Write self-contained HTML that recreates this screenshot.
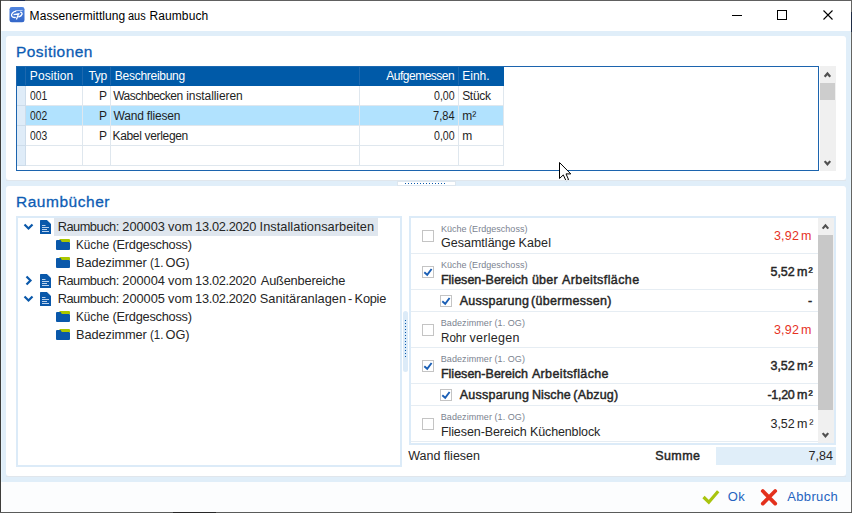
<!DOCTYPE html>
<html><head><meta charset="utf-8">
<style>
*{margin:0;padding:0;box-sizing:border-box}
html,body{width:852px;height:513px;overflow:hidden;background:#606060}
body{position:relative;font-family:"Liberation Sans",sans-serif;color:#1e1e1e}
.a{position:absolute}
svg{position:absolute;overflow:visible}
.t{position:absolute;white-space:pre;line-height:1;font-family:"Liberation Sans",sans-serif}
</style></head><body>

<div class="a" style="left:1px;top:1px;width:850px;height:511px;background:#fcfdfe;"></div>
<div class="a" style="left:1px;top:1px;width:850px;height:30px;background:#ffffff;"></div>
<div class="a" style="left:1px;top:31px;width:850px;height:451px;background:#e0eef9;"></div>
<div class="a" style="left:0px;top:0px;width:1px;height:513px;background:#3e3d3b;"></div>
<div class="a" style="left:851px;top:0px;width:1px;height:513px;background:#646462;"></div>
<div class="a" style="left:0px;top:512px;width:852px;height:1px;background:#5a5b5a;"></div>
<div class="a" style="left:10px;top:0px;width:15px;height:1px;background:#1c2b4e;"></div>
<div class="a" style="left:851px;top:12px;width:1px;height:20px;background:#1f2c44;"></div>
<div class="a" style="left:173px;top:512px;width:43px;height:1px;background:#262626;"></div>
<div class="a" style="left:1px;top:31px;width:1px;height:451px;background:#e7f4fc;"></div>
<div class="a" style="left:850px;top:31px;width:1px;height:451px;background:#e7f4fc;"></div>
<svg style="left:9px;top:7px" width="16" height="16" viewBox="0 0 16 16"><defs><linearGradient id="ig" x1="0" y1="0" x2="0" y2="1"><stop offset="0" stop-color="#4f84e0"/><stop offset="1" stop-color="#3366c8"/></linearGradient></defs><rect x="0.5" y="0" width="15" height="15.3" rx="2.3" fill="url(#ig)"/><path d="M7.2 4.2 C4 4.8 2 6.8 2.6 8.8 C3.1 10.4 5.4 10.6 6.8 10.3" stroke="#fff" stroke-width="1.3" fill="none"/><path d="M6.6 3.6 L13.6 3.4" stroke="#fff" stroke-width="0.8" fill="none" opacity="0.8"/><path d="M4.6 7.6 L10.6 6.6 M9.6 6.8 L7.4 12.6 M11.2 5.2 C14.2 5.6 13.6 8.6 9.4 10.2" stroke="#fff" stroke-width="1.3" fill="none"/></svg>
<div class="a" style="left:732px;top:15px;width:10px;height:1px;background:#000;"></div>
<div class="a" style="left:777px;top:10px;width:10px;height:10px;border:1px solid #000"></div>
<svg style="left:822px;top:9px" width="12" height="12" viewBox="0 0 12 12"><path d="M1.5 1.5 L10.5 10.5 M10.5 1.5 L1.5 10.5" stroke="#000" stroke-width="1.1"/></svg>
<div class="a" style="left:6px;top:36px;width:840px;height:144px;background:#fff;border-radius:3px"></div>
<div class="a" style="left:16px;top:66px;width:803px;height:105px;border:1px solid #1c64ae;background:#fff"></div>
<div class="a" style="left:17px;top:66px;width:487px;height:20px;background:#005aa8;"></div>
<div class="a" style="left:17px;top:66px;width:487px;height:1px;background:#1b68b0;"></div>
<div class="a" style="left:17px;top:86px;width:8px;height:80px;background:#dfecf8;"></div>
<div class="a" style="left:26px;top:106px;width:477px;height:19px;background:#b1e2fe;"></div>
<div class="a" style="left:25px;top:67px;width:1px;height:18px;background:#1d68ae;"></div>
<div class="a" style="left:82px;top:67px;width:1px;height:18px;background:#1d68ae;"></div>
<div class="a" style="left:110px;top:67px;width:1px;height:18px;background:#1d68ae;"></div>
<div class="a" style="left:359px;top:67px;width:1px;height:18px;background:#1d68ae;"></div>
<div class="a" style="left:458px;top:67px;width:1px;height:18px;background:#1d68ae;"></div>
<div class="a" style="left:25px;top:86px;width:1px;height:80px;background:#cddcea;"></div>
<div class="a" style="left:82px;top:86px;width:1px;height:80px;background:#dfe7ee;"></div>
<div class="a" style="left:110px;top:86px;width:1px;height:80px;background:#dfe7ee;"></div>
<div class="a" style="left:359px;top:86px;width:1px;height:80px;background:#dfe7ee;"></div>
<div class="a" style="left:458px;top:86px;width:1px;height:80px;background:#dfe7ee;"></div>
<div class="a" style="left:503px;top:86px;width:1px;height:80px;background:#dfe7ee;"></div>
<div class="a" style="left:26px;top:105px;width:478px;height:1px;background:#dfe7ee;"></div>
<div class="a" style="left:17px;top:105px;width:8px;height:1px;background:#cddcea;"></div>
<div class="a" style="left:26px;top:125px;width:478px;height:1px;background:#dfe7ee;"></div>
<div class="a" style="left:17px;top:125px;width:8px;height:1px;background:#cddcea;"></div>
<div class="a" style="left:26px;top:145px;width:478px;height:1px;background:#dfe7ee;"></div>
<div class="a" style="left:17px;top:145px;width:8px;height:1px;background:#cddcea;"></div>
<div class="a" style="left:26px;top:165px;width:478px;height:1px;background:#dfe7ee;"></div>
<div class="a" style="left:17px;top:165px;width:8px;height:1px;background:#cddcea;"></div>
<div class="a" style="left:820px;top:66px;width:16px;height:105px;background:#f0f0f0;"></div>
<div class="a" style="left:820px;top:83px;width:15px;height:17px;background:#cdcdcd;"></div>
<svg style="left:820px;top:66px" width="16" height="105"><path d="M4.65 10.7 L7.45 7.5 L10.25 10.7" stroke="#505050" stroke-width="2.2" fill="none"/><path d="M4.65 95.1 L7.45 98.3 L10.25 95.1" stroke="#505050" stroke-width="2.2" fill="none"/></svg>
<svg style="left:559px;top:162px" width="14" height="22" viewBox="0 0 14 22"><path d="M0.5 0.5 L0.5 16.5 L4.3 12.9 L7 18.8 L9.6 17.7 L7 11.9 L11.8 11.9 Z" fill="#fff" stroke="#000" stroke-width="1"/></svg>
<div class="a" style="left:6px;top:180px;width:840px;height:1px;background:#e0e6ec;"></div>
<div class="a" style="left:6px;top:476px;width:840px;height:1px;background:#e0e6ec;"></div>
<div class="a" style="left:397px;top:180px;width:59px;height:6px;background:#dde6ee;"></div>
<div class="a" style="left:398px;top:182px;width:57px;height:3px;background:#ffffff;"></div>
<svg style="left:0;top:0" width="852" height="513" shape-rendering="crispEdges"><g fill="#0a5aad"><rect x="405" y="183" width="1" height="1"/><rect x="408" y="183" width="1" height="1"/><rect x="411" y="183" width="1" height="1"/><rect x="414" y="183" width="1" height="1"/><rect x="417" y="183" width="1" height="1"/><rect x="420" y="183" width="1" height="1"/><rect x="423" y="183" width="1" height="1"/><rect x="426" y="183" width="1" height="1"/><rect x="429" y="183" width="1" height="1"/><rect x="432" y="183" width="1" height="1"/><rect x="435" y="183" width="1" height="1"/><rect x="438" y="183" width="1" height="1"/><rect x="441" y="183" width="1" height="1"/><rect x="444" y="183" width="1" height="1"/></g></svg>
<div class="a" style="left:6px;top:186px;width:840px;height:290px;background:#fff;border-radius:3px"></div>
<div class="a" style="left:16px;top:216px;width:386px;height:251px;border:2px solid #dcebf8"></div>
<div class="a" style="left:54px;top:218px;width:324px;height:18px;background:#dfe6ee;"></div>
<div class="a" style="left:403px;top:311px;width:5px;height:61px;background:#dcebf8;border-radius:2.5px"></div>
<svg style="left:0;top:0" width="852" height="513" shape-rendering="crispEdges"><g fill="#0a5aad"><rect x="405" y="320" width="1" height="1"/><rect x="405" y="323" width="1" height="1"/><rect x="405" y="326" width="1" height="1"/><rect x="405" y="329" width="1" height="1"/><rect x="405" y="332" width="1" height="1"/><rect x="405" y="335" width="1" height="1"/><rect x="405" y="338" width="1" height="1"/><rect x="405" y="341" width="1" height="1"/><rect x="405" y="344" width="1" height="1"/><rect x="405" y="347" width="1" height="1"/><rect x="405" y="350" width="1" height="1"/><rect x="405" y="353" width="1" height="1"/><rect x="405" y="356" width="1" height="1"/></g></svg>
<svg style="left:0;top:0" width="852" height="513"><path d="M24.5 224.5 L28.5 228.5 L32.5 224.5" stroke="#0a58aa" stroke-width="2.2" fill="none"/></svg>
<svg style="left:40px;top:220px" width="12" height="14" viewBox="0 0 12 14"><path d="M0.6 0 L7.3 0 L11 3.7 L11 13.4 Q11 14 10.4 14 L0.6 14 Q0 14 0 13.4 L0 0.6 Q0 0 0.6 0 Z" fill="#0a58aa"/><path d="M7.6 0.3 L10.7 3.4" stroke="#ffffff" stroke-width="0.9" fill="none"/><path d="M7.9 1.2 L9.8 3.1 L7.9 3.1 Z" fill="#0a58aa"/><g fill="#bcd2ec"><rect x="2" y="5" width="3.5" height="1"/><rect x="2" y="7" width="7" height="1"/><rect x="2" y="9" width="5" height="1"/><rect x="2" y="11" width="7" height="1"/></g></svg>
<svg style="left:56px;top:239px" width="15" height="12" viewBox="0 0 15 12"><path d="M3.5 0 L13 0 Q14 0 14 1 L14 3 L3.5 3 Z" fill="#abc700"/><path d="M1 1 L4.6 1 L5.8 3 L13 3 Q14 3 14 4 L14 10 Q14 11 13 11 L1 11 Q0 11 0 10 L0 2 Q0 1 1 1 Z" fill="#0a58aa"/></svg>
<svg style="left:56px;top:257px" width="15" height="12" viewBox="0 0 15 12"><path d="M3.5 0 L13 0 Q14 0 14 1 L14 3 L3.5 3 Z" fill="#abc700"/><path d="M1 1 L4.6 1 L5.8 3 L13 3 Q14 3 14 4 L14 10 Q14 11 13 11 L1 11 Q0 11 0 10 L0 2 Q0 1 1 1 Z" fill="#0a58aa"/></svg>
<svg style="left:0;top:0" width="852" height="513"><path d="M26.5 276.5 L30.5 280.5 L26.5 284.5" stroke="#0a58aa" stroke-width="2.2" fill="none"/></svg>
<svg style="left:40px;top:274px" width="12" height="14" viewBox="0 0 12 14"><path d="M0.6 0 L7.3 0 L11 3.7 L11 13.4 Q11 14 10.4 14 L0.6 14 Q0 14 0 13.4 L0 0.6 Q0 0 0.6 0 Z" fill="#0a58aa"/><path d="M7.6 0.3 L10.7 3.4" stroke="#ffffff" stroke-width="0.9" fill="none"/><path d="M7.9 1.2 L9.8 3.1 L7.9 3.1 Z" fill="#0a58aa"/><g fill="#bcd2ec"><rect x="2" y="5" width="3.5" height="1"/><rect x="2" y="7" width="7" height="1"/><rect x="2" y="9" width="5" height="1"/><rect x="2" y="11" width="7" height="1"/></g></svg>
<svg style="left:0;top:0" width="852" height="513"><path d="M24.5 296.5 L28.5 300.5 L32.5 296.5" stroke="#0a58aa" stroke-width="2.2" fill="none"/></svg>
<svg style="left:40px;top:292px" width="12" height="14" viewBox="0 0 12 14"><path d="M0.6 0 L7.3 0 L11 3.7 L11 13.4 Q11 14 10.4 14 L0.6 14 Q0 14 0 13.4 L0 0.6 Q0 0 0.6 0 Z" fill="#0a58aa"/><path d="M7.6 0.3 L10.7 3.4" stroke="#ffffff" stroke-width="0.9" fill="none"/><path d="M7.9 1.2 L9.8 3.1 L7.9 3.1 Z" fill="#0a58aa"/><g fill="#bcd2ec"><rect x="2" y="5" width="3.5" height="1"/><rect x="2" y="7" width="7" height="1"/><rect x="2" y="9" width="5" height="1"/><rect x="2" y="11" width="7" height="1"/></g></svg>
<svg style="left:56px;top:311px" width="15" height="12" viewBox="0 0 15 12"><path d="M3.5 0 L13 0 Q14 0 14 1 L14 3 L3.5 3 Z" fill="#abc700"/><path d="M1 1 L4.6 1 L5.8 3 L13 3 Q14 3 14 4 L14 10 Q14 11 13 11 L1 11 Q0 11 0 10 L0 2 Q0 1 1 1 Z" fill="#0a58aa"/></svg>
<svg style="left:56px;top:329px" width="15" height="12" viewBox="0 0 15 12"><path d="M3.5 0 L13 0 Q14 0 14 1 L14 3 L3.5 3 Z" fill="#abc700"/><path d="M1 1 L4.6 1 L5.8 3 L13 3 Q14 3 14 4 L14 10 Q14 11 13 11 L1 11 Q0 11 0 10 L0 2 Q0 1 1 1 Z" fill="#0a58aa"/></svg>
<div class="a" style="left:409px;top:216px;width:427px;height:229px;border:2px solid #dcebf8"></div>
<div class="a" style="left:411px;top:253px;width:407px;height:1px;background:#e6edf3;"></div>
<div class="a" style="left:411px;top:289px;width:407px;height:1px;background:#e6edf3;"></div>
<div class="a" style="left:411px;top:311px;width:407px;height:1px;background:#e6edf3;"></div>
<div class="a" style="left:411px;top:347px;width:407px;height:1px;background:#e6edf3;"></div>
<div class="a" style="left:411px;top:383px;width:407px;height:1px;background:#e6edf3;"></div>
<div class="a" style="left:411px;top:405px;width:407px;height:1px;background:#e6edf3;"></div>
<div class="a" style="left:411px;top:441px;width:407px;height:1px;background:#e6edf3;"></div>
<div class="a" style="left:818px;top:218px;width:16px;height:225px;background:#f0f0f0;"></div>
<div class="a" style="left:818px;top:235px;width:15px;height:175px;background:#c8c8c8;"></div>
<svg style="left:818px;top:218px" width="16" height="225"><path d="M4.65 10.6 L7.45 7.4 L10.25 10.6" stroke="#505050" stroke-width="2.2" fill="none"/><path d="M4.65 215.1 L7.45 218.3 L10.25 215.1" stroke="#505050" stroke-width="2.2" fill="none"/></svg>
<svg style="left:422px;top:230px" width="12" height="12" viewBox="0 0 12 12"><rect x="0.5" y="0.5" width="11" height="11" fill="#fff" stroke="#c4c4c4" stroke-width="1"/></svg>
<svg style="left:422px;top:266px" width="12" height="12" viewBox="0 0 12 12"><rect x="0.5" y="0.5" width="11" height="11" fill="#fff" stroke="#c4c4c4" stroke-width="1"/><path d="M2.3 6.3 L5.2 8.8 L9.6 3" stroke="#1b5fb5" stroke-width="1.9" fill="none"/></svg>
<svg style="left:440px;top:295px" width="12" height="12" viewBox="0 0 12 12"><rect x="0.5" y="0.5" width="11" height="11" fill="#fff" stroke="#c4c4c4" stroke-width="1"/><path d="M2.3 6.3 L5.2 8.8 L9.6 3" stroke="#1b5fb5" stroke-width="1.9" fill="none"/></svg>
<svg style="left:422px;top:324px" width="12" height="12" viewBox="0 0 12 12"><rect x="0.5" y="0.5" width="11" height="11" fill="#fff" stroke="#c4c4c4" stroke-width="1"/></svg>
<svg style="left:422px;top:360px" width="12" height="12" viewBox="0 0 12 12"><rect x="0.5" y="0.5" width="11" height="11" fill="#fff" stroke="#c4c4c4" stroke-width="1"/><path d="M2.3 6.3 L5.2 8.8 L9.6 3" stroke="#1b5fb5" stroke-width="1.9" fill="none"/></svg>
<svg style="left:440px;top:389px" width="12" height="12" viewBox="0 0 12 12"><rect x="0.5" y="0.5" width="11" height="11" fill="#fff" stroke="#c4c4c4" stroke-width="1"/><path d="M2.3 6.3 L5.2 8.8 L9.6 3" stroke="#1b5fb5" stroke-width="1.9" fill="none"/></svg>
<svg style="left:422px;top:418px" width="12" height="12" viewBox="0 0 12 12"><rect x="0.5" y="0.5" width="11" height="11" fill="#fff" stroke="#c4c4c4" stroke-width="1"/></svg>
<div class="a" style="left:716px;top:447px;width:120px;height:18px;background:#e0eef9;"></div>
<svg style="left:0;top:0" width="852" height="513"><path d="M703.5 497 L708.8 502.2 L718.2 491.2" stroke="#a9c40f" stroke-width="3.2" fill="none"/></svg>
<svg style="left:0;top:0" width="852" height="513"><path d="M762.8 491 L775.2 503.6 M775.2 491 L762.8 503.6" stroke="#e3311d" stroke-width="3.8" fill="none" stroke-linecap="round"/></svg>
<div class="t" style="left:29.6px;top:10px;font-size:12px;font-weight:400;letter-spacing:0.06px;color:#000;">Massenermittlung</div>
<div class="t" style="left:128.49px;top:10px;font-size:12px;font-weight:400;letter-spacing:0px;color:#000;transform:scaleX(0.9111);transform-origin:0 0;">aus</div>
<div class="t" style="left:149.4px;top:10px;font-size:12px;font-weight:400;letter-spacing:0.114px;color:#000;">Raumbuch</div>
<div class="t" style="left:16.0px;top:44px;font-size:15.5px;font-weight:400;letter-spacing:0.444px;color:#0d5cb4;-webkit-text-stroke:0.3px #0d5cb4;">Positionen</div>
<div class="t" style="left:16.0px;top:194px;font-size:15.5px;font-weight:400;letter-spacing:0.522px;color:#0d5cb4;-webkit-text-stroke:0.3px #0d5cb4;">Raumbücher</div>
<div class="t" style="left:29.8px;top:70px;font-size:12px;font-weight:400;letter-spacing:0.086px;color:#ffffff;">Position</div>
<div class="t" style="left:88.5px;top:70px;font-size:12px;font-weight:400;letter-spacing:-0.35px;color:#ffffff;">Typ</div>
<div class="t" style="left:114.8px;top:70px;font-size:12px;font-weight:400;letter-spacing:-0.273px;color:#ffffff;">Beschreibung</div>
<div class="t" style="left:386.3px;top:70px;font-size:12px;font-weight:400;letter-spacing:-0.5px;color:#ffffff;">Aufgemessen</div>
<div class="t" style="left:462.2px;top:70px;font-size:12px;font-weight:400;letter-spacing:0.025px;color:#ffffff;">Einh.</div>
<div class="t" style="left:30.1px;top:90px;font-size:12px;font-weight:400;letter-spacing:0px;color:#1e1e1e;transform:scaleX(0.8579);transform-origin:0 0;">001</div>
<div class="t" style="left:99.0px;top:90px;font-size:12px;font-weight:400;letter-spacing:0px;color:#1e1e1e;">P</div>
<div class="t" style="left:113.2px;top:90px;font-size:12px;font-weight:400;letter-spacing:-0.49px;color:#1e1e1e;">Waschbecken</div>
<div class="t" style="left:186.2px;top:90px;font-size:12px;font-weight:400;letter-spacing:-0.073px;color:#1e1e1e;">installieren</div>
<div class="t" style="left:434.3px;top:90px;font-size:12px;font-weight:400;letter-spacing:0px;color:#1e1e1e;transform:scaleX(0.8826);transform-origin:0 0;">0,00</div>
<div class="t" style="left:462.2px;top:90px;font-size:12px;font-weight:400;letter-spacing:-0.325px;color:#1e1e1e;">Stück</div>
<div class="t" style="left:30.1px;top:110px;font-size:12px;font-weight:400;letter-spacing:0px;color:#1e1e1e;transform:scaleX(0.8579);transform-origin:0 0;">002</div>
<div class="t" style="left:99.0px;top:110px;font-size:12px;font-weight:400;letter-spacing:0px;color:#1e1e1e;">P</div>
<div class="t" style="left:113.5px;top:110px;font-size:12px;font-weight:400;letter-spacing:-0.182px;color:#1e1e1e;">Wand fliesen</div>
<div class="t" style="left:433.38px;top:110px;font-size:12px;font-weight:400;letter-spacing:0px;color:#1e1e1e;transform:scaleX(0.9227);transform-origin:0 0;">7,84</div>
<div class="t" style="left:462.2px;top:110px;font-size:12px;font-weight:400;letter-spacing:0.1px;color:#1e1e1e;">m²</div>
<div class="t" style="left:30.1px;top:130px;font-size:12px;font-weight:400;letter-spacing:0px;color:#1e1e1e;transform:scaleX(0.8579);transform-origin:0 0;">003</div>
<div class="t" style="left:99.0px;top:130px;font-size:12px;font-weight:400;letter-spacing:0px;color:#1e1e1e;">P</div>
<div class="t" style="left:112.5px;top:130px;font-size:12px;font-weight:400;letter-spacing:-0.331px;color:#1e1e1e;">Kabel verlegen</div>
<div class="t" style="left:434.3px;top:130px;font-size:12px;font-weight:400;letter-spacing:0px;color:#1e1e1e;transform:scaleX(0.8826);transform-origin:0 0;">0,00</div>
<div class="t" style="left:462.2px;top:130px;font-size:12px;font-weight:400;letter-spacing:0px;color:#1e1e1e;">m</div>
<div class="t" style="left:57.7px;top:221px;font-size:12.8px;font-weight:400;letter-spacing:-0.488px;color:#262626;">Raumbuch:</div>
<div class="t" style="left:122.3px;top:221px;font-size:12.8px;font-weight:400;letter-spacing:-0.02px;color:#262626;">200003</div>
<div class="t" style="left:167.9px;top:221px;font-size:12.8px;font-weight:400;letter-spacing:0.15px;color:#262626;">vom</div>
<div class="t" style="left:195.1px;top:221px;font-size:12.8px;font-weight:400;letter-spacing:-0.322px;color:#262626;">13.02.2020</div>
<div class="t" style="left:259.6px;top:221px;font-size:12.8px;font-weight:400;letter-spacing:0.03px;color:#262626;">Installationsarbeiten</div>
<div class="t" style="left:76.19px;top:239px;font-size:12.8px;font-weight:400;letter-spacing:0px;color:#262626;transform:scaleX(0.9143);transform-origin:0 0;">Küche</div>
<div class="t" style="left:112.5px;top:239px;font-size:12.8px;font-weight:400;letter-spacing:-0.25px;color:#262626;">(Erdgeschoss)</div>
<div class="t" style="left:76.1px;top:257px;font-size:12.8px;font-weight:400;letter-spacing:-0.122px;color:#262626;">Badezimmer</div>
<div class="t" style="left:150.4px;top:257px;font-size:12.8px;font-weight:400;letter-spacing:0px;color:#262626;transform:scaleX(0.9);transform-origin:0 0;">(1.</div>
<div class="t" style="left:165.6px;top:257px;font-size:12.8px;font-weight:400;letter-spacing:-0.15px;color:#262626;">OG)</div>
<div class="t" style="left:57.7px;top:275px;font-size:12.8px;font-weight:400;letter-spacing:-0.488px;color:#262626;">Raumbuch:</div>
<div class="t" style="left:122.3px;top:275px;font-size:12.8px;font-weight:400;letter-spacing:-0.02px;color:#262626;">200004</div>
<div class="t" style="left:167.9px;top:275px;font-size:12.8px;font-weight:400;letter-spacing:0.15px;color:#262626;">vom</div>
<div class="t" style="left:195.1px;top:275px;font-size:12.8px;font-weight:400;letter-spacing:-0.322px;color:#262626;">13.02.2020</div>
<div class="t" style="left:260.8px;top:275px;font-size:12.8px;font-weight:400;letter-spacing:-0.192px;color:#262626;">Außenbereiche</div>
<div class="t" style="left:57.7px;top:293px;font-size:12.8px;font-weight:400;letter-spacing:-0.488px;color:#262626;">Raumbuch:</div>
<div class="t" style="left:122.3px;top:293px;font-size:12.8px;font-weight:400;letter-spacing:-0.02px;color:#262626;">200005</div>
<div class="t" style="left:167.9px;top:293px;font-size:12.8px;font-weight:400;letter-spacing:0.15px;color:#262626;">vom</div>
<div class="t" style="left:195.1px;top:293px;font-size:12.8px;font-weight:400;letter-spacing:-0.322px;color:#262626;">13.02.2020</div>
<div class="t" style="left:259.8px;top:293px;font-size:12.8px;font-weight:400;letter-spacing:0.015px;color:#262626;">Sanitäranlagen</div>
<div class="t" style="left:348.0px;top:293px;font-size:12.8px;font-weight:400;letter-spacing:0px;color:#262626;">-</div>
<div class="t" style="left:354.6px;top:293px;font-size:12.8px;font-weight:400;letter-spacing:-0.25px;color:#262626;">Kopie</div>
<div class="t" style="left:76.19px;top:311px;font-size:12.8px;font-weight:400;letter-spacing:0px;color:#262626;transform:scaleX(0.9143);transform-origin:0 0;">Küche</div>
<div class="t" style="left:112.5px;top:311px;font-size:12.8px;font-weight:400;letter-spacing:-0.25px;color:#262626;">(Erdgeschoss)</div>
<div class="t" style="left:76.1px;top:329px;font-size:12.8px;font-weight:400;letter-spacing:-0.122px;color:#262626;">Badezimmer</div>
<div class="t" style="left:150.4px;top:329px;font-size:12.8px;font-weight:400;letter-spacing:0px;color:#262626;transform:scaleX(0.9);transform-origin:0 0;">(1.</div>
<div class="t" style="left:165.6px;top:329px;font-size:12.8px;font-weight:400;letter-spacing:-0.15px;color:#262626;">OG)</div>
<div class="t" style="left:440.9px;top:225px;font-size:9px;font-weight:400;letter-spacing:0.028px;color:#7b8390;">Küche (Erdgeschoss)</div>
<div class="t" style="left:440.9px;top:237px;font-size:12.5px;font-weight:400;letter-spacing:0.03px;color:#262626;">Gesamtlänge</div>
<div class="t" style="left:518.4px;top:237px;font-size:12.5px;font-weight:400;letter-spacing:0.15px;color:#262626;">Kabel</div>
<div class="t" style="left:774.0px;top:230px;font-size:12.5px;font-weight:400;letter-spacing:0.167px;color:#e6321f;">3,92</div>
<div class="t" style="left:800.9px;top:230px;font-size:12.5px;font-weight:400;letter-spacing:0px;color:#e6321f;">m</div>
<div class="t" style="left:440.9px;top:261px;font-size:9px;font-weight:400;letter-spacing:0.028px;color:#7b8390;">Küche (Erdgeschoss)</div>
<div class="t" style="left:440.9px;top:274px;font-size:12.5px;font-weight:400;letter-spacing:0.021px;color:#262626;-webkit-text-stroke:0.45px #262626;">Fliesen-Bereich</div>
<div class="t" style="left:531.9px;top:274px;font-size:12.5px;font-weight:400;letter-spacing:0.267px;color:#262626;-webkit-text-stroke:0.45px #262626;">über</div>
<div class="t" style="left:562.0px;top:274px;font-size:12.5px;font-weight:400;letter-spacing:0.408px;color:#262626;-webkit-text-stroke:0.45px #262626;">Arbeitsfläche</div>
<div class="t" style="left:770.5px;top:266px;font-size:12.5px;font-weight:400;letter-spacing:-0.067px;color:#262626;-webkit-text-stroke:0.45px #262626;">5,52</div>
<div class="t" style="left:796.9px;top:266px;font-size:12.5px;font-weight:400;letter-spacing:1.1px;color:#262626;-webkit-text-stroke:0.45px #262626;">m²</div>
<div class="t" style="left:459.7px;top:295px;font-size:12.5px;font-weight:400;letter-spacing:0.278px;color:#262626;-webkit-text-stroke:0.45px #262626;">Aussparung</div>
<div class="t" style="left:531.1px;top:295px;font-size:12.5px;font-weight:400;letter-spacing:0.291px;color:#262626;-webkit-text-stroke:0.45px #262626;">(übermessen)</div>
<div class="t" style="left:808.1px;top:295px;font-size:12.5px;font-weight:400;letter-spacing:0px;color:#262626;-webkit-text-stroke:0.45px #262626;">-</div>
<div class="t" style="left:440.8px;top:319px;font-size:9px;font-weight:400;letter-spacing:0.065px;color:#7b8390;">Badezimmer (1. OG)</div>
<div class="t" style="left:441.17px;top:332px;font-size:12.5px;font-weight:400;letter-spacing:0px;color:#262626;transform:scaleX(0.9308);transform-origin:0 0;">Rohr</div>
<div class="t" style="left:469.6px;top:332px;font-size:12.5px;font-weight:400;letter-spacing:0.257px;color:#262626;">verlegen</div>
<div class="t" style="left:774.0px;top:324px;font-size:12.5px;font-weight:400;letter-spacing:0.167px;color:#e6321f;">3,92</div>
<div class="t" style="left:800.9px;top:324px;font-size:12.5px;font-weight:400;letter-spacing:0px;color:#e6321f;">m</div>
<div class="t" style="left:440.8px;top:355px;font-size:9px;font-weight:400;letter-spacing:0.065px;color:#7b8390;">Badezimmer (1. OG)</div>
<div class="t" style="left:440.9px;top:368px;font-size:12.5px;font-weight:400;letter-spacing:0.021px;color:#262626;-webkit-text-stroke:0.45px #262626;">Fliesen-Bereich</div>
<div class="t" style="left:531.9px;top:368px;font-size:12.5px;font-weight:400;letter-spacing:0.367px;color:#262626;-webkit-text-stroke:0.45px #262626;">Arbeitsfläche</div>
<div class="t" style="left:770.5px;top:360px;font-size:12.5px;font-weight:400;letter-spacing:-0.067px;color:#262626;-webkit-text-stroke:0.45px #262626;">3,52</div>
<div class="t" style="left:796.9px;top:360px;font-size:12.5px;font-weight:400;letter-spacing:1.1px;color:#262626;-webkit-text-stroke:0.45px #262626;">m²</div>
<div class="t" style="left:459.7px;top:389px;font-size:12.5px;font-weight:400;letter-spacing:0.278px;color:#262626;-webkit-text-stroke:0.45px #262626;">Aussparung</div>
<div class="t" style="left:531.9px;top:389px;font-size:12.5px;font-weight:400;letter-spacing:0.14px;color:#262626;-webkit-text-stroke:0.45px #262626;">Nische</div>
<div class="t" style="left:573.3px;top:389px;font-size:12.5px;font-weight:400;letter-spacing:0.183px;color:#262626;-webkit-text-stroke:0.45px #262626;">(Abzug)</div>
<div class="t" style="left:767.5px;top:389px;font-size:12.5px;font-weight:400;letter-spacing:-0.3px;color:#262626;-webkit-text-stroke:0.45px #262626;">-1,20</div>
<div class="t" style="left:796.9px;top:389px;font-size:12.5px;font-weight:400;letter-spacing:1.1px;color:#262626;-webkit-text-stroke:0.45px #262626;">m²</div>
<div class="t" style="left:440.8px;top:413px;font-size:9px;font-weight:400;letter-spacing:0.065px;color:#7b8390;">Badezimmer (1. OG)</div>
<div class="t" style="left:440.9px;top:426px;font-size:12.5px;font-weight:400;letter-spacing:-0.079px;color:#262626;">Fliesen-Bereich</div>
<div class="t" style="left:530.0px;top:426px;font-size:12.5px;font-weight:400;letter-spacing:-0.13px;color:#262626;">Küchenblock</div>
<div class="t" style="left:770.5px;top:418px;font-size:12.5px;font-weight:400;letter-spacing:-0.067px;color:#262626;">3,52</div>
<div class="t" style="left:796.9px;top:418px;font-size:12.5px;font-weight:400;letter-spacing:1.9px;color:#262626;">m²</div>
<div class="t" style="left:408.2px;top:450px;font-size:12.5px;font-weight:400;letter-spacing:0.0px;color:#262626;">Wand fliesen</div>
<div class="t" style="left:655.2px;top:450px;font-size:12.5px;font-weight:400;letter-spacing:0.425px;color:#262626;-webkit-text-stroke:0.45px #262626;">Summe</div>
<div class="t" style="left:808.6px;top:450px;font-size:12.5px;font-weight:400;letter-spacing:0px;color:#262626;">7,84</div>
<div class="t" style="left:727.7px;top:490px;font-size:13px;font-weight:400;letter-spacing:0px;color:#2563c0;">O</div>
<div class="t" style="left:738.2px;top:490px;font-size:13px;font-weight:400;letter-spacing:0px;color:#2563c0;">k</div>
<div class="t" style="left:787.3px;top:490px;font-size:13px;font-weight:400;letter-spacing:0.333px;color:#2563c0;">Abbruch</div>
</body></html>
